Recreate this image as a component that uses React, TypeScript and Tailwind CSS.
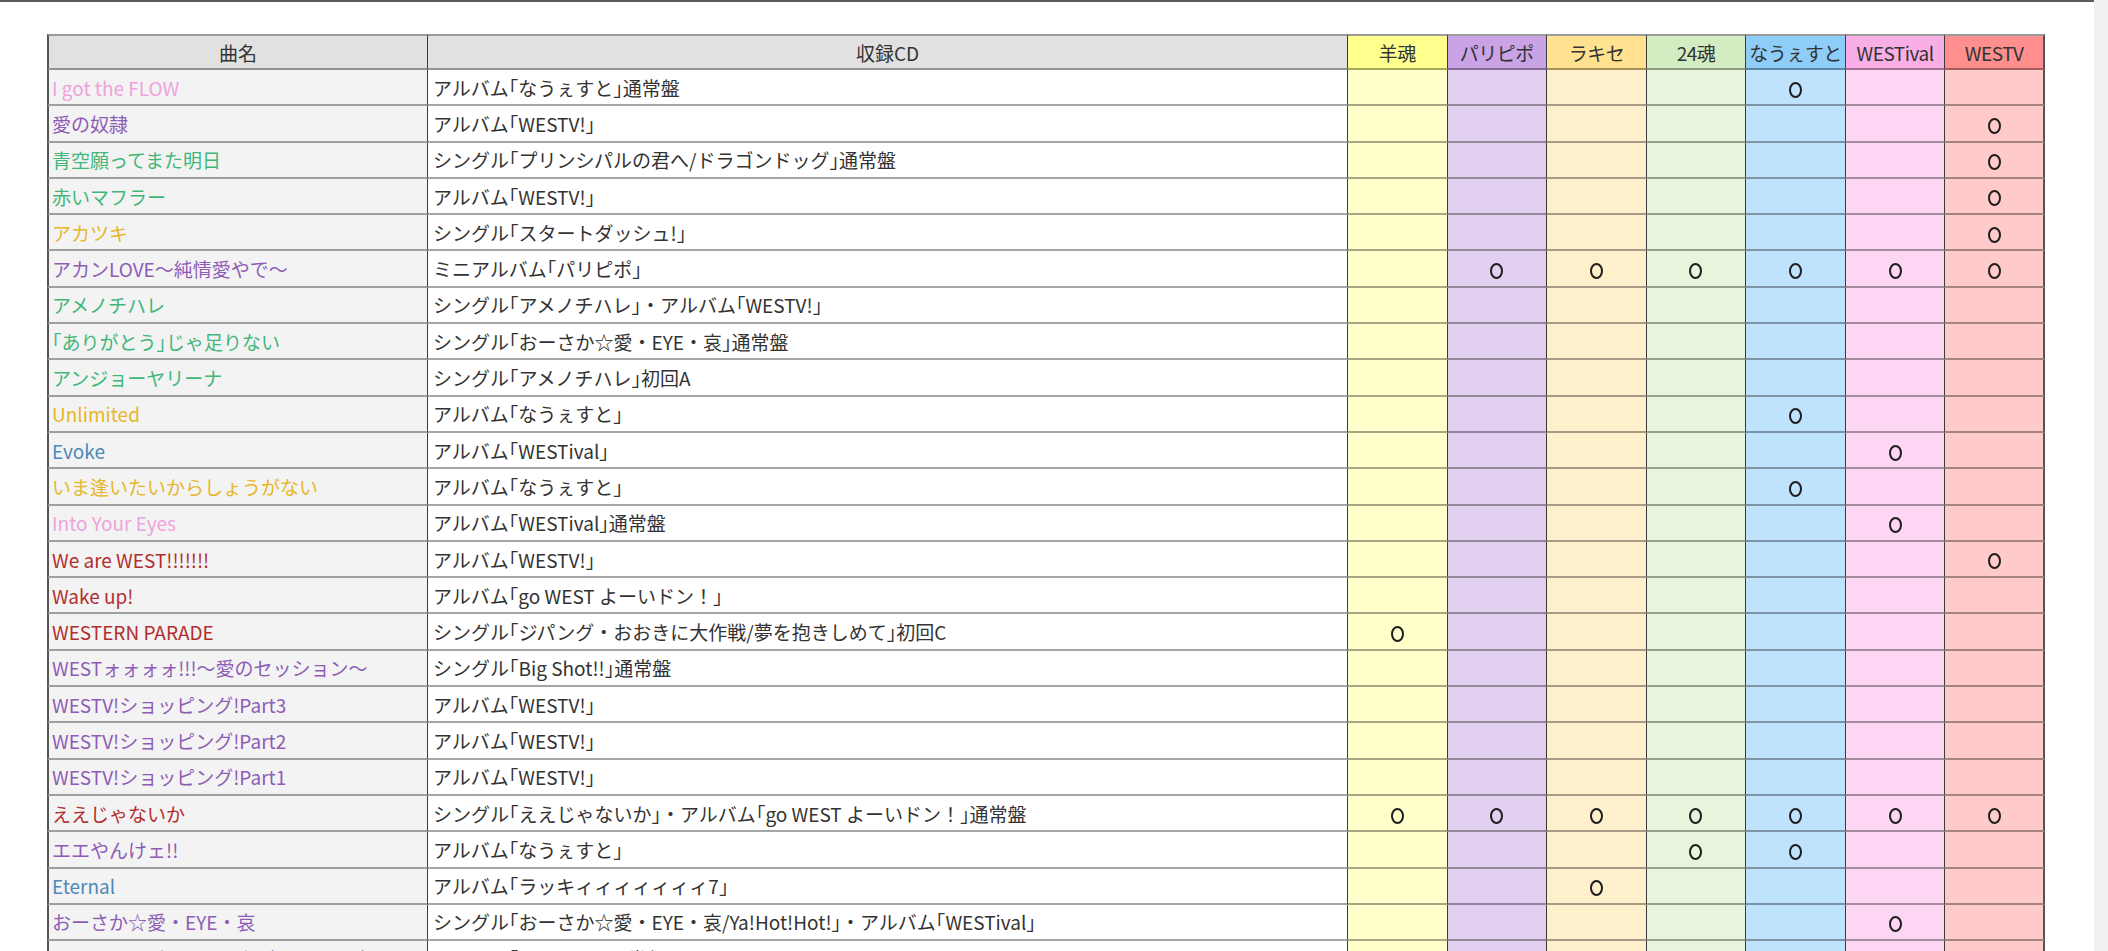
import React from 'react'

type Song = {
  name: string
  color: string
  cd: string
  marks: number[]
}

// column order: 羊魂, パリピポ, ラキセ, 24魂, なうぇすと, WESTival, WESTV
const TOURS = [
  { label: '羊魂', head: 'bg-[#ffff8e]', body: 'bg-[#ffffcc]' },
  { label: 'パリピポ', head: 'bg-[#c9a3e6]', body: 'bg-[#e2d0f0]' },
  { label: 'ラキセ', head: 'bg-[#ffe18f]', body: 'bg-[#fff0cc]' },
  { label: '24魂', head: 'bg-[#d4ecc1]', body: 'bg-[#e8f5dc]' },
  { label: 'なうぇすと', head: 'bg-[#8dcdf8]', body: 'bg-[#bfe3fd]' },
  { label: 'WESTival', head: 'bg-[#f9aee6]', body: 'bg-[#fdd6f3]' },
  { label: 'WESTV', head: 'bg-[#ff8f8f]', body: 'bg-[#ffcaca]' },
]

const PINK = 'text-[#f0a2dc]'
const PURPLE = 'text-[#8e5cb6]'
const GREEN = 'text-[#3fb779]'
const YELLOW = 'text-[#e8b62a]'
const BLUE = 'text-[#4d89b9]'
const RED = 'text-[#b22e2e]'

const SONGS: Song[] = [
  { name: 'I got the FLOW', color: PINK, cd: 'アルバム「なうぇすと」通常盤', marks: [4] },
  { name: '愛の奴隷', color: PURPLE, cd: 'アルバム「WESTV!」', marks: [6] },
  { name: '青空願ってまた明日', color: GREEN, cd: 'シングル「プリンシパルの君へ/ドラゴンドッグ」通常盤', marks: [6] },
  { name: '赤いマフラー', color: GREEN, cd: 'アルバム「WESTV!」', marks: [6] },
  { name: 'アカツキ', color: YELLOW, cd: 'シングル「スタートダッシュ!」', marks: [6] },
  { name: 'アカンLOVE〜純情愛やで〜', color: PURPLE, cd: 'ミニアルバム「パリピポ」', marks: [1, 2, 3, 4, 5, 6] },
  { name: 'アメノチハレ', color: GREEN, cd: 'シングル「アメノチハレ」・アルバム「WESTV!」', marks: [] },
  { name: '「ありがとう」じゃ足りない', color: GREEN, cd: 'シングル「おーさか☆愛・EYE・哀」通常盤', marks: [] },
  { name: 'アンジョーヤリーナ', color: GREEN, cd: 'シングル「アメノチハレ」初回A', marks: [] },
  { name: 'Unlimited', color: YELLOW, cd: 'アルバム「なうぇすと」', marks: [4] },
  { name: 'Evoke', color: BLUE, cd: 'アルバム「WESTival」', marks: [5] },
  { name: 'いま逢いたいからしょうがない', color: YELLOW, cd: 'アルバム「なうぇすと」', marks: [4] },
  { name: 'Into Your Eyes', color: PINK, cd: 'アルバム「WESTival」通常盤', marks: [5] },
  { name: 'We are WEST!!!!!!!', color: RED, cd: 'アルバム「WESTV!」', marks: [6] },
  { name: 'Wake up!', color: RED, cd: 'アルバム「go WEST よーいドン！」', marks: [] },
  { name: 'WESTERN PARADE', color: RED, cd: 'シングル「ジパング・おおきに大作戦/夢を抱きしめて」初回C', marks: [0] },
  { name: 'WESTォォォォ!!!〜愛のセッション〜', color: PURPLE, cd: 'シングル「Big Shot!!」通常盤', marks: [] },
  { name: 'WESTV!ショッピング!Part3', color: PURPLE, cd: 'アルバム「WESTV!」', marks: [] },
  { name: 'WESTV!ショッピング!Part2', color: PURPLE, cd: 'アルバム「WESTV!」', marks: [] },
  { name: 'WESTV!ショッピング!Part1', color: PURPLE, cd: 'アルバム「WESTV!」', marks: [] },
  { name: 'ええじゃないか', color: RED, cd: 'シングル「ええじゃないか」・アルバム「go WEST よーいドン！」通常盤', marks: [0, 1, 2, 3, 4, 5, 6] },
  { name: 'エエやんけェ!!', color: PURPLE, cd: 'アルバム「なうぇすと」', marks: [3, 4] },
  { name: 'Eternal', color: BLUE, cd: 'アルバム「ラッキィィィィィィィ7」', marks: [2] },
  { name: 'おーさか☆愛・EYE・哀', color: PURPLE, cd: 'シングル「おーさか☆愛・EYE・哀/Ya!Hot!Hot!」・アルバム「WESTival」', marks: [5] },
  { name: 'おーさか☆愛・EYE・哀（WEST ver.）', color: PURPLE, cd: 'アルバム「WESTival」通常盤', marks: [] },
]

// brackets are set half-width like the sheet's font
function Txt({ text }: { text: string }) {
  const parts = text.split(/([「」])/)
  return (
    <>
      {parts.map((p, i) =>
        p === '「' || p === '」' ? (
          <span key={i} className="[font-feature-settings:'halt']">
            {p}
          </span>
        ) : (
          <React.Fragment key={i}>{p}</React.Fragment>
        )
      )}
    </>
  )
}

function Mark() {
  return (
    <span
      aria-label="○"
      className="inline-block w-[13px] h-[16px] rounded-[50%] border-[2.5px] border-[#1e1e1e] align-middle"
    />
  )
}

const cellBase = 'border-b-2 border-b-black/35 border-r border-r-[#3a3a3a] p-0'

export default function App() {
  return (
    <div
      className="flex h-[951px] w-full overflow-hidden bg-white text-[#333]"
      style={{ fontFamily: '"Noto Sans CJK JP", "Noto Sans", sans-serif' }}
    >
      <div className="flex-1 border-t-2 border-t-[#5a5a5a]">
        <table className="mt-[32px] ml-[47px] w-[1998px] table-fixed border-separate border-spacing-0 text-[19px] leading-none">
          <colgroup>
            <col className="w-[381px]" />
            <col className="w-[920px]" />
            {TOURS.map((t) => (
              <col key={t.label} className="w-[99.57px]" />
            ))}
          </colgroup>
          <thead>
            <tr className="h-[36px]">
              <th className={`${cellBase} border-t-2 border-t-[#9a9a9a] border-l-2 border-l-[#555] bg-[#e1e1e1] font-normal`}>
                曲名
              </th>
              <th className={`${cellBase} border-t-2 border-t-[#9a9a9a] bg-[#e1e1e1] font-normal`}>収録CD</th>
              {TOURS.map((t, i) => (
                <th
                  key={t.label}
                  className={`${cellBase} border-t-2 border-t-[#9a9a9a] ${t.head} font-normal whitespace-nowrap tracking-tight ${
                    i === TOURS.length - 1 ? 'border-r-2 border-r-[#555]' : ''
                  }`}
                >
                  {t.label}
                </th>
              ))}
            </tr>
          </thead>
          <tbody>
            {SONGS.map((s) => (
              <tr key={s.name} className="h-[36.3px]">
                <td className={`${cellBase} border-l-2 border-l-[#555] bg-[#f3f3f3] pl-[3px] whitespace-nowrap overflow-hidden ${s.color}`}>
                  <Txt text={s.name} />
                </td>
                <td className={`${cellBase} bg-white pl-[5px] whitespace-nowrap overflow-hidden text-[#333]`}>
                  <Txt text={s.cd} />
                </td>
                {TOURS.map((t, i) => (
                  <td
                    key={t.label}
                    className={`${cellBase} ${t.body} text-center align-middle ${
                      i === TOURS.length - 1 ? 'border-r-2 border-r-[#555]' : ''
                    }`}
                  >
                    {s.marks.includes(i) ? <Mark /> : null}
                  </td>
                ))}
              </tr>
            ))}
          </tbody>
        </table>
      </div>
      <div className="w-[14px] shrink-0 bg-[#f1f1f1]" />
    </div>
  )
}
